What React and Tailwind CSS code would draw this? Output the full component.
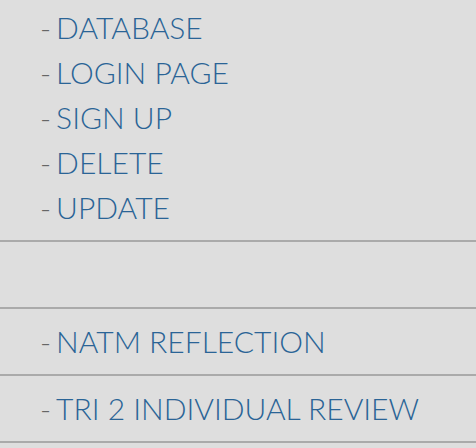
export default function App() {
  const items = ["DATABASE", "LOGIN PAGE", "SIGN UP", "DELETE", "UPDATE"];
  const Item = ({ t }) => (
    <div className="flex items-center h-[45px] pl-[40px]">
      <span className="text-[#666666] mr-[5px]">-</span>
      <span className="text-[#2a6496]">{t}</span>
    </div>
  );
  return (
    <div
      className="w-[476px] h-[448px] bg-[#dedede] overflow-hidden text-[30px] font-light"
      style={{ fontFamily: "Lato, 'Open Sans', sans-serif" }}
    >
      <div className="pt-[5px] pb-[10px] border-b-2 border-[#aaaaaa]">
        {items.map((t) => (
          <Item key={t} t={t} />
        ))}
      </div>
      <div className="h-[67px] border-b-2 border-[#aaaaaa]" />
      <div className="h-[67px] border-b-2 border-[#aaaaaa] flex items-center">
        <Item t="NATM REFLECTION" />
      </div>
      <div className="h-[67px] border-b-2 border-[#aaaaaa] flex items-center">
        <Item t="TRI 2 INDIVIDUAL REVIEW" />
      </div>
    </div>
  );
}
